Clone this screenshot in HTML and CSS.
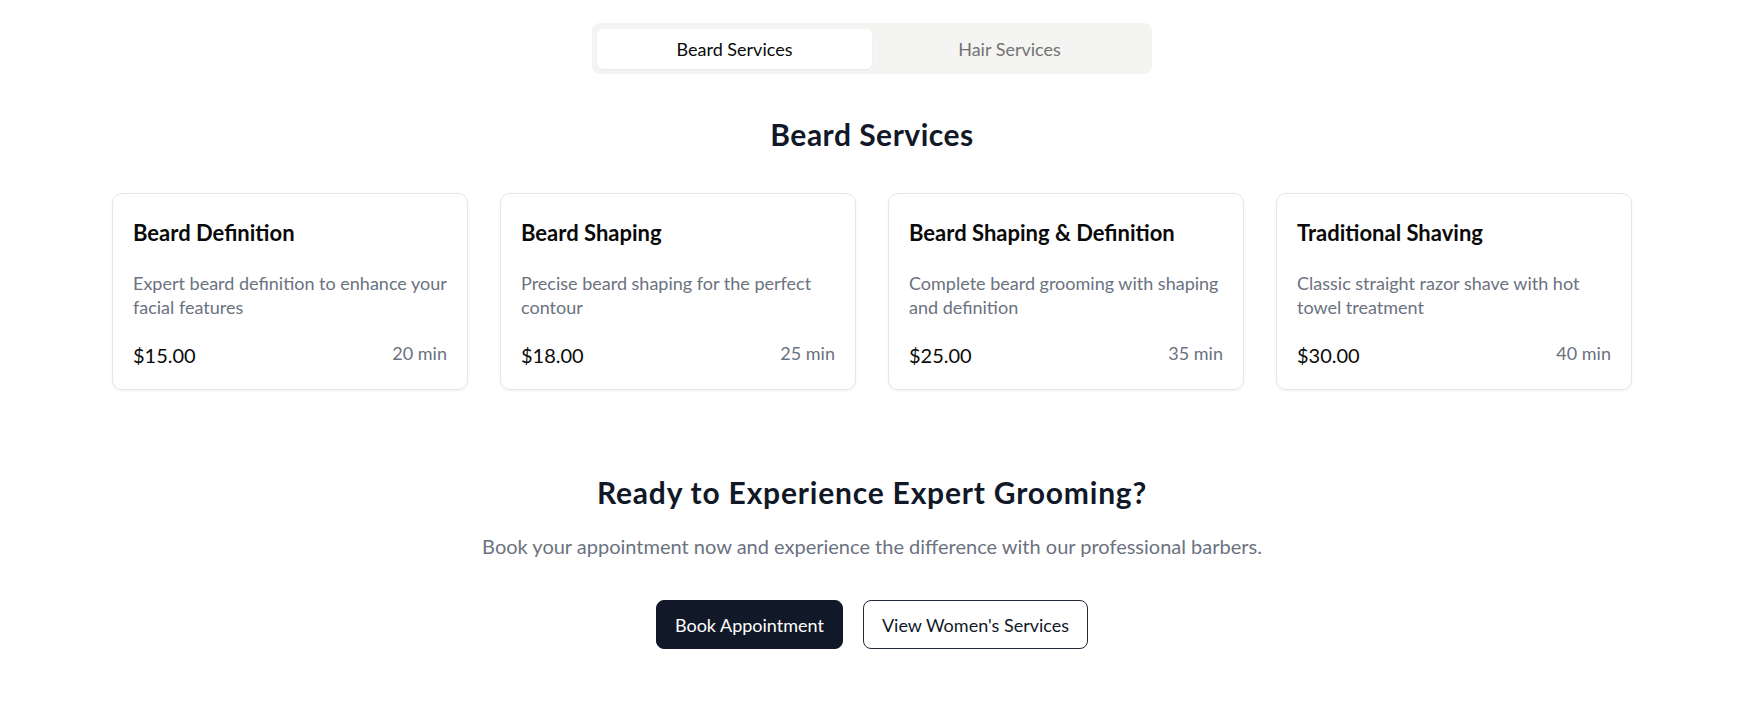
FILE: index.html
```html
<!DOCTYPE html>
<html lang="en">
<head>
<meta charset="utf-8">
<title>Beard Services</title>
<link rel="stylesheet" href="styles.css">
</head>
<body>
<main class="page">
  <div class="tabs-row">
    <div class="tabs">
      <button class="tab tab-active">Beard Services</button>
      <button class="tab">Hair Services</button>
    </div>
  </div>

  <h2 class="section-title">Beard Services</h2>

  <div class="cards">
    <div class="card">
      <h3 class="card-title">Beard Definition</h3>
      <p class="card-desc">Expert beard definition to enhance your facial features</p>
      <div class="card-meta"><span class="price">$15.00</span><span class="duration">20 min</span></div>
    </div>
    <div class="card">
      <h3 class="card-title">Beard Shaping</h3>
      <p class="card-desc">Precise beard shaping for the perfect contour</p>
      <div class="card-meta"><span class="price">$18.00</span><span class="duration">25 min</span></div>
    </div>
    <div class="card">
      <h3 class="card-title">Beard Shaping &amp; Definition</h3>
      <p class="card-desc">Complete beard grooming with shaping and definition</p>
      <div class="card-meta"><span class="price">$25.00</span><span class="duration">35 min</span></div>
    </div>
    <div class="card">
      <h3 class="card-title">Traditional Shaving</h3>
      <p class="card-desc">Classic straight razor shave with hot towel treatment</p>
      <div class="card-meta"><span class="price">$30.00</span><span class="duration">40 min</span></div>
    </div>
  </div>

  <section class="cta">
    <h2 class="cta-title">Ready to Experience Expert Grooming?</h2>
    <p class="cta-text">Book your appointment now and experience the difference with our professional barbers.</p>
    <div class="cta-actions">
      <a class="btn btn-dark" href="#">Book Appointment</a>
      <a class="btn btn-outline" href="#">View Women's Services</a>
    </div>
  </section>
</main>
</body>
</html>
```
FILE: styles.css
```css
* { box-sizing: border-box; }

html, body {
  margin: 0;
  padding: 0;
  background: #ffffff;
}

body {
  font-family: Lato, "Noto Sans", sans-serif;
  color: #0a0a0a;
  padding-right: 20px;
}

.page {
  width: 1520px;
  margin: 0 auto;
}

.tabs-row {
  display: flex;
  justify-content: center;
  padding-top: 23px;
}

.tabs {
  width: 560px;
  display: grid;
  grid-template-columns: 1fr 1fr;
  background: #f4f4f2;
  border-radius: 8px;
  padding: 6px 5px 5px;
}

.tab {
  height: 40px;
  border: 0;
  background: transparent;
  font-family: inherit;
  font-size: 18px;
  color: #737373;
  border-radius: 6px;
  cursor: pointer;
}

.tab-active {
  background: #ffffff;
  color: #0a0a0a;
  box-shadow: 0 1px 2px rgba(0, 0, 0, 0.06);
}

.section-title {
  margin: 42px 0 41px;
  text-align: center;
  font-size: 30px;
  line-height: 36px;
  font-weight: 700;
  letter-spacing: 0.5px;
  color: #111827;
}

.cards {
  display: grid;
  grid-template-columns: repeat(4, 1fr);
  gap: 32px;
}

.card {
  border: 1px solid #e5e7eb;
  border-radius: 10px;
  padding: 24px 20px 20px;
  box-shadow: 0 1px 3px rgba(0, 0, 0, 0.06);
  background: #fff;
}

.card-title {
  margin: 0;
  font-size: 22px;
  line-height: 30px;
  font-weight: 700;
  color: #0a0a0a;
}

.card-desc {
  margin: 23px 0 0;
  font-size: 18px;
  line-height: 24px;
  height: 48px;
  color: #6b7280;
}

.card-meta {
  margin-top: 22px;
  display: flex;
  justify-content: space-between;
  align-items: flex-start;
}

.price {
  font-size: 20px;
  line-height: 28px;
  color: #0a0a0a;
}

.duration {
  font-size: 18px;
  line-height: 24px;
  color: #6b7280;
}

.cta {
  margin-top: 84px;
  text-align: center;
}

.cta-title {
  margin: 0;
  font-size: 30px;
  line-height: 36px;
  font-weight: 700;
  letter-spacing: 0.8px;
  color: #111827;
}

.cta-text {
  margin: 22px 0 0;
  font-size: 20px;
  line-height: 28px;
  color: #6b7280;
}

.cta-actions {
  margin-top: 40px;
  display: flex;
  justify-content: center;
  gap: 20px;
}

.btn {
  display: inline-flex;
  align-items: center;
  justify-content: center;
  height: 49px;
  padding: 0 18px;
  border-radius: 8px;
  font-size: 18px;
  text-decoration: none;
}

.btn-dark {
  background: #111827;
  color: #ffffff;
  border: 1px solid #111827;
}

.btn-outline {
  background: #ffffff;
  color: #111827;
  border: 1px solid #1f2937;
}
```
